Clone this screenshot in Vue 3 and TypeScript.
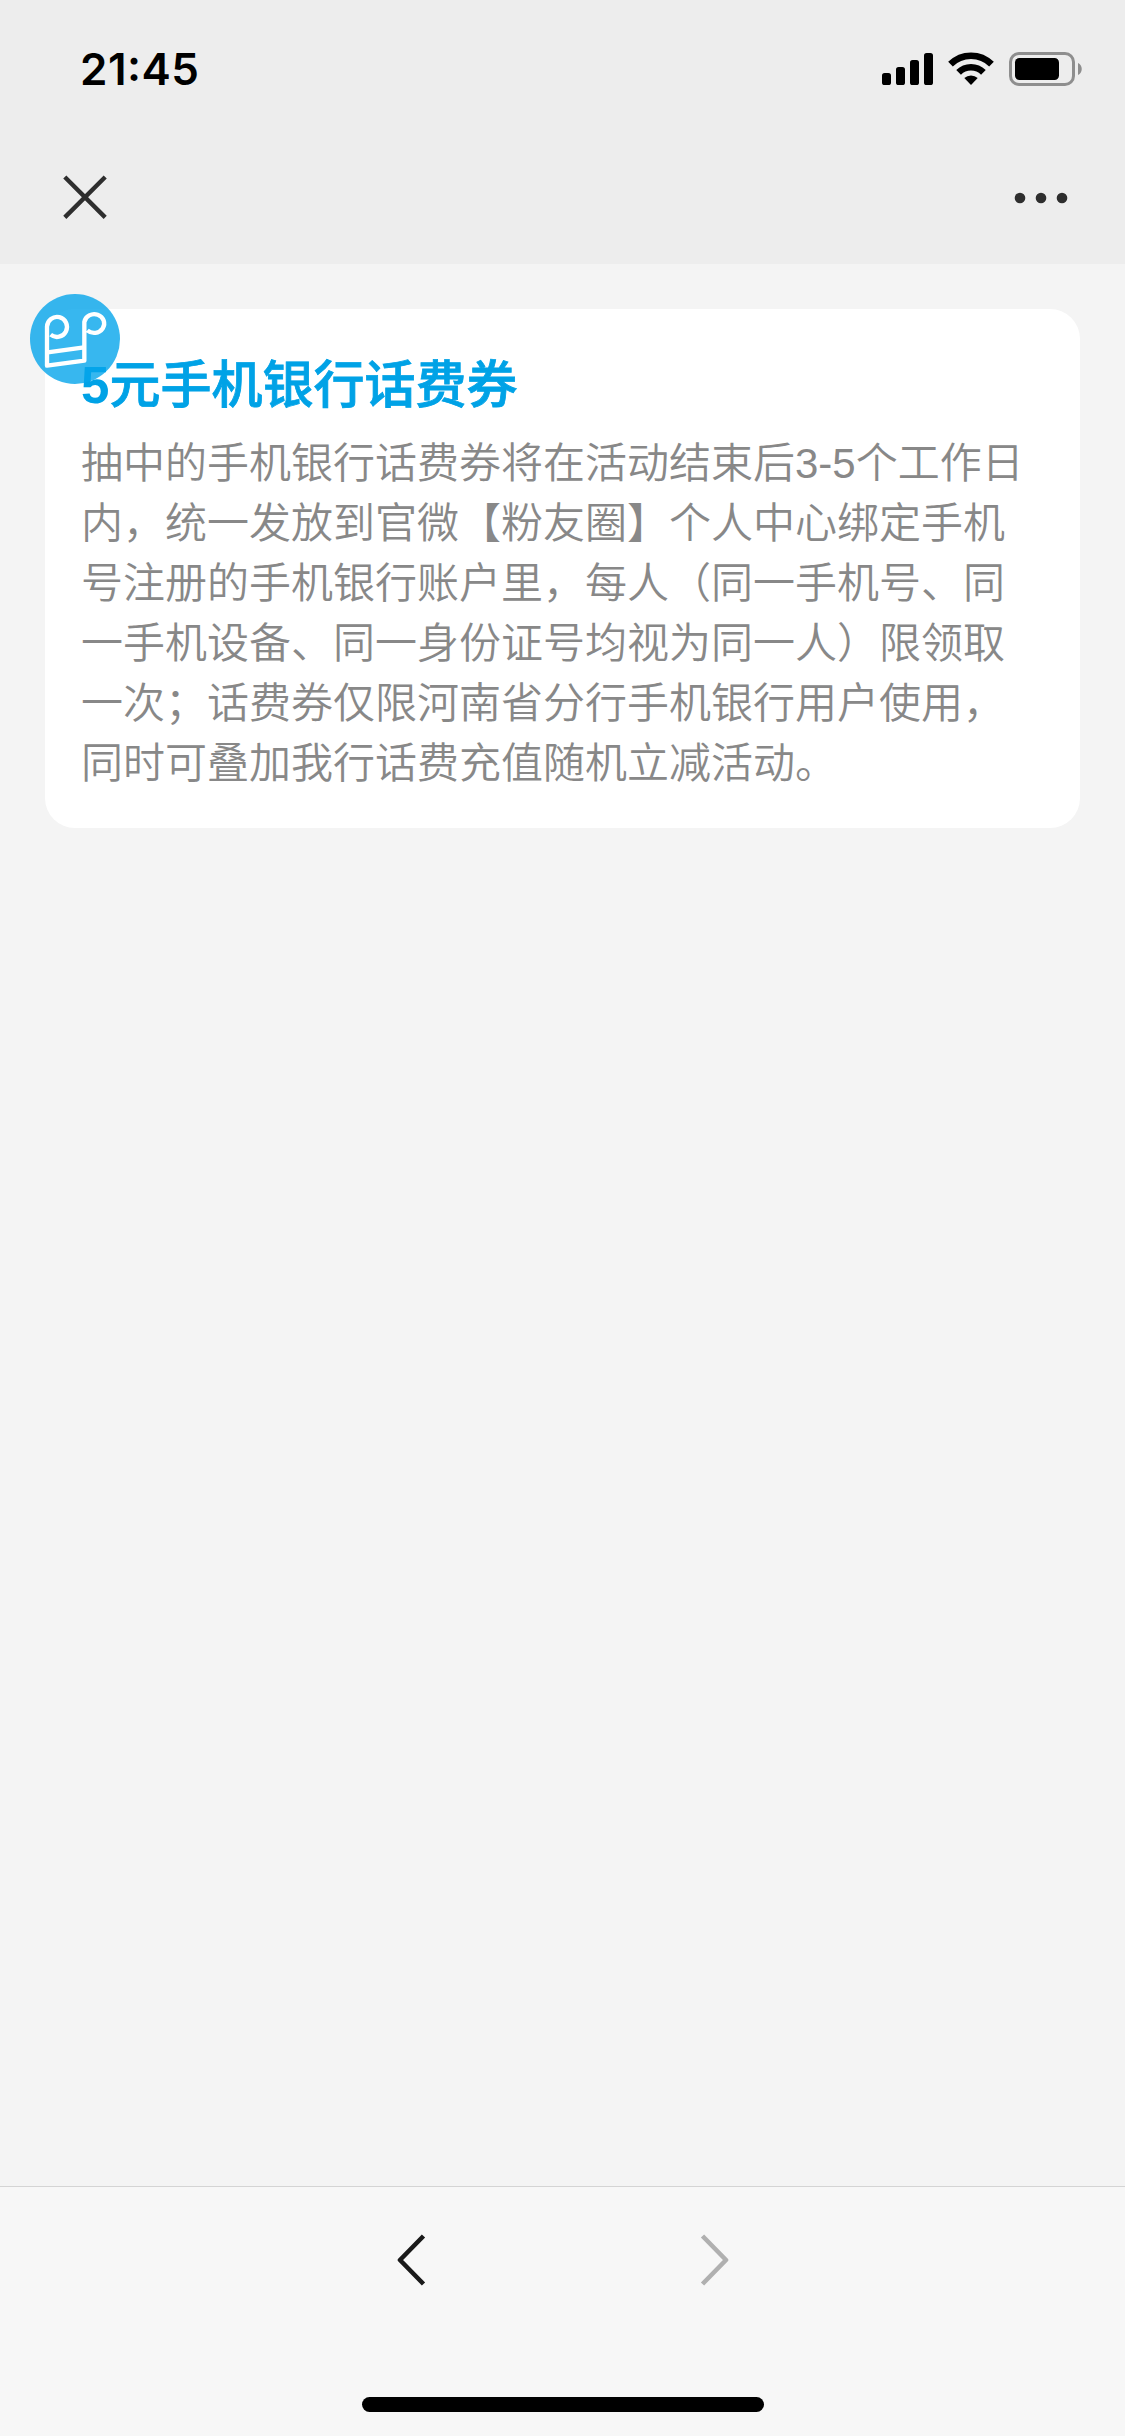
<script setup lang="ts">
const hours = '21'
const minutes = '45'
const amount = '5'
const title = '元手机银行话费券'
const lines: string[] = [
  '抽中的手机银行话费券将在活动结束后3-5个工作日',
  '内，统一发放到官微【粉友圈】个人中心绑定手机',
  '号注册的手机银行账户里，每人（同一手机号、同',
  '一手机设备、同一身份证号均视为同一人）限领取',
  '一次；话费券仅限河南省分行手机银行用户使用，',
  '同时可叠加我行话费充值随机立减活动。',
]
</script>

<template>
  <div class="screen">
    <header class="top">
      <div class="status">
        <div class="time">{{ hours }}<span class="colon">:</span>{{ minutes }}</div>
        <svg class="indicators" width="204" height="36" viewBox="0 0 204 36">
          <rect x="0" y="21" width="9" height="12" rx="2.6" />
          <rect x="14" y="15" width="9" height="18" rx="2.6" />
          <rect x="28" y="8" width="9" height="25" rx="2.6" />
          <rect x="42" y="1" width="9" height="32" rx="2.6" />
          <g fill="none" stroke="#000" stroke-width="6.6">
            <path d="M68.5 12.2a29 29 0 0 1 41 0" />
            <path d="M76.6 20.4a17.5 17.5 0 0 1 24.8 0" />
          </g>
          <path d="M82.3 26.1a9.6 9.6 0 0 1 13.4 0L89 33z" />
          <rect x="128.5" y="1.5" width="63" height="31" rx="8.5" fill="none" stroke="#8e8e8e" stroke-width="3" />
          <rect x="133" y="6" width="44" height="22" rx="4.5" />
          <path d="M196 11c5 2 5 10 0 12z" fill="#8e8e8e" />
        </svg>
      </div>
      <nav class="nav">
        <svg width="44" height="46" viewBox="0 0 44 46">
          <path d="M1.8 2L42.2 42.4M42.2 2L1.8 42.4" stroke="#2e2e2e" stroke-width="4.4" />
        </svg>
        <svg width="54" height="12" viewBox="0 0 54 12" fill="#2e2e2e">
          <circle cx="6" cy="6" r="5.3" />
          <circle cx="27" cy="6" r="5.3" />
          <circle cx="48" cy="6" r="5.3" />
        </svg>
      </nav>
    </header>

    <main class="content">
      <section class="card">
        <h1 class="title"><span class="amount">{{ amount }}</span>{{ title }}</h1>
        <p class="text">
          <span v-for="line in lines" :key="line" class="line">{{ line }}</span>
        </p>
        <svg class="badge" width="90" height="90" viewBox="0 0 270 270">
          <circle cx="135" cy="135" r="135" fill="#05a5eb" fill-opacity="0.8" />
          <g fill="none" stroke="#fff" stroke-width="13" stroke-linejoin="round">
            <path d="M62 122A30 30 0 1 0 51 98V215L163 200V84A30 28 0 1 1 172 109" />
            <path d="M53 175L162 160" />
          </g>
        </svg>
      </section>
    </main>

    <footer class="bottom">
      <div class="pager">
        <svg width="30" height="54" viewBox="0 0 30 54">
          <path d="M26.5 3L3 27L26.5 51" fill="none" stroke="#1a1a1a" stroke-width="4.6" stroke-linejoin="round" />
        </svg>
        <svg width="30" height="54" viewBox="0 0 30 54">
          <path d="M3.5 3L27 27L3.5 51" fill="none" stroke="#b0b0b0" stroke-width="4.6" stroke-linejoin="round" />
        </svg>
      </div>
      <div class="home"></div>
    </footer>
  </div>
</template>

<style>
body {
  margin: 0;
}
</style>

<style scoped>
.screen {
  display: flex;
  flex-direction: column;
  width: 1125px;
  height: 2436px;
  overflow: hidden;
  background: #f4f4f4;
  font-family: "Liberation Sans", "Noto Sans CJK SC", sans-serif;
}
svg {
  display: block;
  flex: none;
}
.top {
  box-sizing: border-box;
  height: 264px;
  background: #ededed;
}
.status {
  display: flex;
  justify-content: space-between;
  box-sizing: border-box;
  height: 132px;
  padding: 42px 39px 0 80px;
}
.time {
  height: 54px;
  line-height: 54px;
  font-family: Inter, sans-serif;
  font-size: 44px;
  font-weight: 600;
  letter-spacing: 0.5px;
  color: #000;
}
.colon {
  position: relative;
  top: -4px;
}
.indicators {
  margin-top: 10px;
}
.nav {
  display: flex;
  align-items: center;
  justify-content: space-between;
  height: 132px;
  padding: 0 57px 0 63px;
}
.content {
  flex: 1;
  padding: 45px 45px 0;
}
.card {
  position: relative;
  box-sizing: border-box;
  height: 519px;
  padding: 41px 36px 0;
  border-radius: 30px;
  background: #fff;
}
.title {
  height: 72px;
  margin: 0;
  font-size: 51px;
  line-height: 72px;
  font-weight: 500;
  color: #00a2e6;
  -webkit-text-stroke: 0.8px #00a2e6;
}
.amount {
  font-weight: 700;
  -webkit-text-stroke: 0;
}
.text {
  margin: 12px 0 0;
  font-size: 42px;
  line-height: 60px;
  font-weight: 350;
  color: #888;
}
.line {
  display: block;
  white-space: nowrap;
}
.badge {
  position: absolute;
  left: -15px;
  top: -15px;
}
.bottom {
  display: flex;
  flex-direction: column;
  align-items: center;
  justify-content: space-between;
  box-sizing: border-box;
  height: 250px;
  padding: 46px 0 24px;
  border-top: 1px solid #d4d4d4;
  background: #f7f7f7;
}
.pager {
  display: flex;
  gap: 272px;
}
.home {
  width: 402px;
  height: 15px;
  border-radius: 8px;
  background: #000;
}
</style>
